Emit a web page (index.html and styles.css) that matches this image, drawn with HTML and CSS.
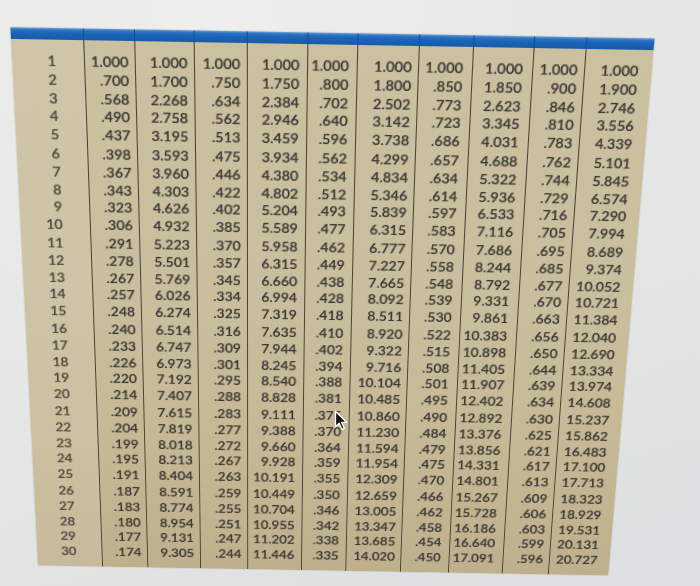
FILE: index.html
```html
<!DOCTYPE html>
<html lang="en">
<head>
<meta charset="utf-8">
<title>Learning curve table</title>
<link rel="stylesheet" href="styles.css">
</head>
<body>
<div class="page">
  <div class="sheet">
    <div class="col c0">
      <div class="hd"></div>
      <div class="bd">
        <div class="grp"><div>1</div><div>2</div><div>3</div><div>4</div><div>5</div></div>
        <div class="grp"><div>6</div><div>7</div><div>8</div><div>9</div><div>10</div></div>
        <div class="grp"><div>11</div><div>12</div><div>13</div><div>14</div><div>15</div></div>
        <div class="grp"><div>16</div><div>17</div><div>18</div><div>19</div><div>20</div></div>
        <div class="grp"><div>21</div><div>22</div><div>23</div><div>24</div><div>25</div></div>
        <div class="grp"><div>26</div><div>27</div><div>28</div><div>29</div><div>30</div></div>
      </div>
    </div>
    <div class="col c1">
      <div class="hd"></div>
      <div class="bd">
        <div class="grp"><div>1.000</div><div>.700</div><div>.568</div><div>.490</div><div>.437</div></div>
        <div class="grp"><div>.398</div><div>.367</div><div>.343</div><div>.323</div><div>.306</div></div>
        <div class="grp"><div>.291</div><div>.278</div><div>.267</div><div>.257</div><div>.248</div></div>
        <div class="grp"><div>.240</div><div>.233</div><div>.226</div><div>.220</div><div>.214</div></div>
        <div class="grp"><div>.209</div><div>.204</div><div>.199</div><div>.195</div><div>.191</div></div>
        <div class="grp"><div>.187</div><div>.183</div><div>.180</div><div>.177</div><div>.174</div></div>
      </div>
    </div>
    <div class="col c2">
      <div class="hd"></div>
      <div class="bd">
        <div class="grp"><div>1.000</div><div>1.700</div><div>2.268</div><div>2.758</div><div>3.195</div></div>
        <div class="grp"><div>3.593</div><div>3.960</div><div>4.303</div><div>4.626</div><div>4.932</div></div>
        <div class="grp"><div>5.223</div><div>5.501</div><div>5.769</div><div>6.026</div><div>6.274</div></div>
        <div class="grp"><div>6.514</div><div>6.747</div><div>6.973</div><div>7.192</div><div>7.407</div></div>
        <div class="grp"><div>7.615</div><div>7.819</div><div>8.018</div><div>8.213</div><div>8.404</div></div>
        <div class="grp"><div>8.591</div><div>8.774</div><div>8.954</div><div>9.131</div><div>9.305</div></div>
      </div>
    </div>
    <div class="col c3">
      <div class="hd"></div>
      <div class="bd">
        <div class="grp"><div>1.000</div><div>.750</div><div>.634</div><div>.562</div><div>.513</div></div>
        <div class="grp"><div>.475</div><div>.446</div><div>.422</div><div>.402</div><div>.385</div></div>
        <div class="grp"><div>.370</div><div>.357</div><div>.345</div><div>.334</div><div>.325</div></div>
        <div class="grp"><div>.316</div><div>.309</div><div>.301</div><div>.295</div><div>.288</div></div>
        <div class="grp"><div>.283</div><div>.277</div><div>.272</div><div>.267</div><div>.263</div></div>
        <div class="grp"><div>.259</div><div>.255</div><div>.251</div><div>.247</div><div>.244</div></div>
      </div>
    </div>
    <div class="col c4">
      <div class="hd"></div>
      <div class="bd">
        <div class="grp"><div>1.000</div><div>1.750</div><div>2.384</div><div>2.946</div><div>3.459</div></div>
        <div class="grp"><div>3.934</div><div>4.380</div><div>4.802</div><div>5.204</div><div>5.589</div></div>
        <div class="grp"><div>5.958</div><div>6.315</div><div>6.660</div><div>6.994</div><div>7.319</div></div>
        <div class="grp"><div>7.635</div><div>7.944</div><div>8.245</div><div>8.540</div><div>8.828</div></div>
        <div class="grp"><div>9.111</div><div>9.388</div><div>9.660</div><div>9.928</div><div>10.191</div></div>
        <div class="grp"><div>10.449</div><div>10.704</div><div>10.955</div><div>11.202</div><div>11.446</div></div>
      </div>
    </div>
    <div class="col c5">
      <div class="hd"></div>
      <div class="bd">
        <div class="grp"><div>1.000</div><div>.800</div><div>.702</div><div>.640</div><div>.596</div></div>
        <div class="grp"><div>.562</div><div>.534</div><div>.512</div><div>.493</div><div>.477</div></div>
        <div class="grp"><div>.462</div><div>.449</div><div>.438</div><div>.428</div><div>.418</div></div>
        <div class="grp"><div>.410</div><div>.402</div><div>.394</div><div>.388</div><div>.381</div></div>
        <div class="grp"><div>.375</div><div>.370</div><div>.364</div><div>.359</div><div>.355</div></div>
        <div class="grp"><div>.350</div><div>.346</div><div>.342</div><div>.338</div><div>.335</div></div>
      </div>
    </div>
    <div class="col c6">
      <div class="hd"></div>
      <div class="bd">
        <div class="grp"><div>1.000</div><div>1.800</div><div>2.502</div><div>3.142</div><div>3.738</div></div>
        <div class="grp"><div>4.299</div><div>4.834</div><div>5.346</div><div>5.839</div><div>6.315</div></div>
        <div class="grp"><div>6.777</div><div>7.227</div><div>7.665</div><div>8.092</div><div>8.511</div></div>
        <div class="grp"><div>8.920</div><div>9.322</div><div>9.716</div><div>10.104</div><div>10.485</div></div>
        <div class="grp"><div>10.860</div><div>11.230</div><div>11.594</div><div>11.954</div><div>12.309</div></div>
        <div class="grp"><div>12.659</div><div>13.005</div><div>13.347</div><div>13.685</div><div>14.020</div></div>
      </div>
    </div>
    <div class="col c7">
      <div class="hd"></div>
      <div class="bd">
        <div class="grp"><div>1.000</div><div>.850</div><div>.773</div><div>.723</div><div>.686</div></div>
        <div class="grp"><div>.657</div><div>.634</div><div>.614</div><div>.597</div><div>.583</div></div>
        <div class="grp"><div>.570</div><div>.558</div><div>.548</div><div>.539</div><div>.530</div></div>
        <div class="grp"><div>.522</div><div>.515</div><div>.508</div><div>.501</div><div>.495</div></div>
        <div class="grp"><div>.490</div><div>.484</div><div>.479</div><div>.475</div><div>.470</div></div>
        <div class="grp"><div>.466</div><div>.462</div><div>.458</div><div>.454</div><div>.450</div></div>
      </div>
    </div>
    <div class="col c8">
      <div class="hd"></div>
      <div class="bd">
        <div class="grp"><div>1.000</div><div>1.850</div><div>2.623</div><div>3.345</div><div>4.031</div></div>
        <div class="grp"><div>4.688</div><div>5.322</div><div>5.936</div><div>6.533</div><div>7.116</div></div>
        <div class="grp"><div>7.686</div><div>8.244</div><div>8.792</div><div>9.331</div><div>9.861</div></div>
        <div class="grp"><div>10.383</div><div>10.898</div><div>11.405</div><div>11.907</div><div>12.402</div></div>
        <div class="grp"><div>12.892</div><div>13.376</div><div>13.856</div><div>14.331</div><div>14.801</div></div>
        <div class="grp"><div>15.267</div><div>15.728</div><div>16.186</div><div>16.640</div><div>17.091</div></div>
      </div>
    </div>
    <div class="col c9">
      <div class="hd"></div>
      <div class="bd">
        <div class="grp"><div>1.000</div><div>.900</div><div>.846</div><div>.810</div><div>.783</div></div>
        <div class="grp"><div>.762</div><div>.744</div><div>.729</div><div>.716</div><div>.705</div></div>
        <div class="grp"><div>.695</div><div>.685</div><div>.677</div><div>.670</div><div>.663</div></div>
        <div class="grp"><div>.656</div><div>.650</div><div>.644</div><div>.639</div><div>.634</div></div>
        <div class="grp"><div>.630</div><div>.625</div><div>.621</div><div>.617</div><div>.613</div></div>
        <div class="grp"><div>.609</div><div>.606</div><div>.603</div><div>.599</div><div>.596</div></div>
      </div>
    </div>
    <div class="col c10">
      <div class="hd"></div>
      <div class="bd">
        <div class="grp"><div>1.000</div><div>1.900</div><div>2.746</div><div>3.556</div><div>4.339</div></div>
        <div class="grp"><div>5.101</div><div>5.845</div><div>6.574</div><div>7.290</div><div>7.994</div></div>
        <div class="grp"><div>8.689</div><div>9.374</div><div>10.052</div><div>10.721</div><div>11.384</div></div>
        <div class="grp"><div>12.040</div><div>12.690</div><div>13.334</div><div>13.974</div><div>14.608</div></div>
        <div class="grp"><div>15.237</div><div>15.862</div><div>16.483</div><div>17.100</div><div>17.713</div></div>
        <div class="grp"><div>18.323</div><div>18.929</div><div>19.531</div><div>20.131</div><div>20.727</div></div>
      </div>
    </div>
  </div>
  <svg class="cursor" width="14" height="21" viewBox="0 0 14 21" aria-hidden="true">
    <path d="M1.5 1.2 L1.5 16.8 L5.2 13.2 L7.9 19.4 L10.3 18.4 L7.7 12.4 L12.6 12.4 Z" fill="#111" stroke="#fff" stroke-width="1.3" stroke-linejoin="round"/>
  </svg>
</div>
</body>
</html>
```

FILE: styles.css
```css
html, body {
  margin: 0;
  padding: 0;
  overflow: hidden;
}

.page {
  position: relative;
  width: 700px;
  height: 586px;
  overflow: hidden;
  background:
    radial-gradient(ellipse at 30% 0%, #eeeeec 0%, rgba(238,238,236,0) 60%),
    linear-gradient(160deg, #e7e7e5 0%, #e4e6e6 55%, #dcdedf 100%);
  font-family: "Lato", "Open Sans", "DejaVu Sans", sans-serif;
}

.sheet {
  width: 605px;
  height: 570px;
  margin: 32.5px 0 0 24.5px;
  display: grid;
  grid-template-columns: 68.5px 48.4px 56.1px 50.3px 57.2px 46.5px 58.5px 50.2px 57.3px 48.7px 63.3px;
  background: linear-gradient(180deg, #cbc1a1 0%, #c9bf9e 45%, #c5b894 75%, #beb08d 100%);
  transform: rotate(1deg) perspective(1598px) rotateX(-20deg);
  box-shadow: 0 0 1px rgba(120, 110, 90, 0.6);
}

.col {
  display: flex;
  flex-direction: column;
  min-width: 0;
}

.hd {
  height: 11px;
  background: linear-gradient(180deg, #6d9fd8 0px, #2a72c4 2px, #1b64b6 45%, #175aa8 100%);
  border-right: 1.5px solid #12508f;
}

.bd {
  flex: 1;
  padding: 11.25px 0 0 0;
  border-right: 1.5px solid #4a4233;
  text-align: right;
  font-size: 14px;
  font-weight: 600;
  color: #3b3935;
  text-shadow: 0 0 1px rgba(60, 58, 52, 0.4);
}

.grp {
  margin-bottom: 1.6px;
}

.grp div {
  height: 17.7px;
  line-height: 17.7px;
  white-space: nowrap;
}

.c0 .bd {
  padding-right: 26px;
  color: #514b42;
  background: rgba(214, 207, 182, 0.35);
}

.c1 .bd { padding-right: 5.7px; }
.c2 .bd { padding-right: 6px; }
.c3 .bd { padding-right: 6.3px; }
.c4 .bd { padding-right: 7.5px; }
.c5 .bd { padding-right: 7.3px; }
.c6 .bd { padding-right: 6.4px; }
.c7 .bd { padding-right: 8px; }
.c8 .bd { padding-right: 8.8px; }
.c9 .bd { padding-right: 5.8px; }
.c10 .bd { padding-right: 12.5px; border-right: none; }
.c10 .hd { border-right: none; }

.cursor {
  position: absolute;
  left: 334px;
  top: 410px;
}
```
